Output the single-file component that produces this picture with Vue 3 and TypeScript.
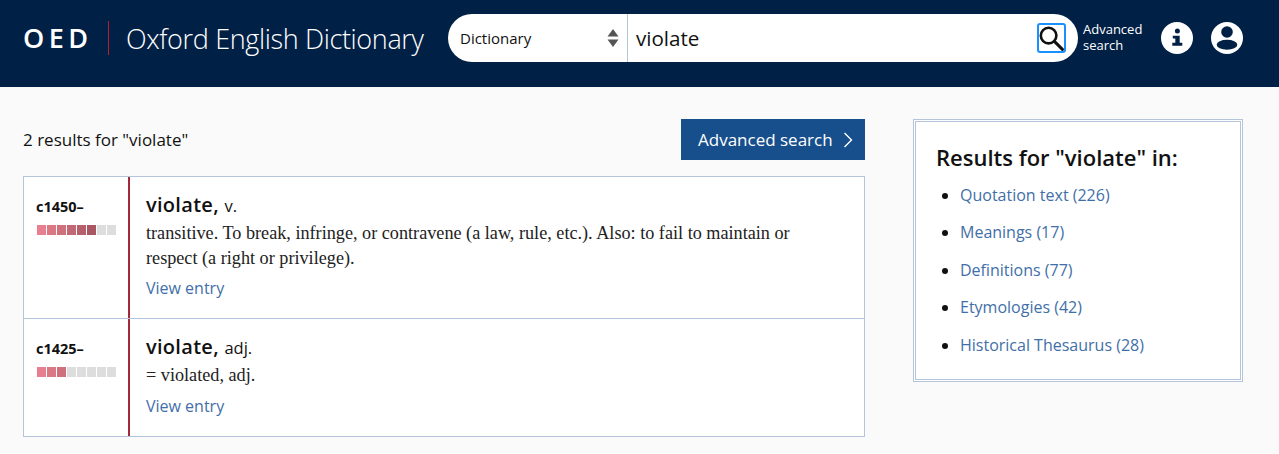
<script setup lang="ts">
interface Entry {
  date: string;
  filled: number;
  word: string;
  pos: string;
  text: string;
}

const heat = ['#e87f8f', '#da7884', '#cf707c', '#c26874', '#b6606c', '#a95763'];

const entries: Entry[] = [
  {
    date: 'c1450–',
    filled: 6,
    word: 'violate,',
    pos: 'v.',
    text: 'transitive. To break, infringe, or contravene (a law, rule, etc.). Also: to fail to maintain or respect (a right or privilege).',
  },
  {
    date: 'c1425–',
    filled: 3,
    word: 'violate,',
    pos: 'adj.',
    text: '= violated, adj.',
  },
];

const facets = [
  'Quotation text (226)',
  'Meanings (17)',
  'Definitions (77)',
  'Etymologies (42)',
  'Historical Thesaurus (28)',
];

const cellColor = (entry: Entry, i: number) => (i < entry.filled ? heat[i] : '#dddddd');
</script>

<template>
  <div class="page">
    <header class="top">
      <div class="logo">
        <span class="logo__short">OED</span>
        <span class="logo__long">Oxford English Dictionary</span>
      </div>
      <div class="search">
        <div class="search__scope">
          <span>Dictionary</span>
          <svg width="12" height="20" viewBox="0 0 12 20">
            <path d="M6 1 L11.5 8.5 H0.5 Z M6 19 L0.5 11.5 H11.5 Z" fill="#555" />
          </svg>
        </div>
        <div class="search__field">
          <span>violate</span>
          <button class="search__btn" type="button">
            <svg width="25" height="25" viewBox="0 0 25 25" fill="none" stroke="#111">
              <circle cx="9.6" cy="9.6" r="7.8" stroke-width="2.6" />
              <path d="M15.4 15.4 L23.4 23.4" stroke-width="3" stroke-linecap="round" />
            </svg>
          </button>
        </div>
      </div>
      <a class="top__adv">Advanced search</a>
      <svg class="top__icon top__icon--info" width="32" height="32" viewBox="0 0 32 32">
        <circle cx="16" cy="16" r="16" fill="#fff" />
        <circle cx="16.4" cy="9" r="2.5" fill="#012046" />
        <path d="M11.8 13.7 H18.7 V20.8 H21.3 V23.7 H11.3 V20.8 H14.3 V16.4 H11.8 Z" fill="#012046" />
      </svg>
      <svg class="top__icon" width="32" height="32" viewBox="0 0 32 32">
        <circle cx="16" cy="16" r="16" fill="#fff" />
        <circle cx="16" cy="10" r="5.8" fill="#012046" />
        <ellipse cx="16" cy="22.7" rx="10.3" ry="5" fill="#012046" />
      </svg>
    </header>

    <main class="body">
      <section class="results">
        <div class="results__head">
          <span class="results__count">2 results for "violate"</span>
          <a class="adv-btn">
            Advanced search
            <svg width="10" height="16" viewBox="0 0 10 16" fill="none" stroke="#fff" stroke-width="1.4">
              <path d="M1.5 1 L8.5 8 L1.5 15" />
            </svg>
          </a>
        </div>
        <div class="list">
          <article v-for="entry in entries" :key="entry.date" class="entry">
            <div class="entry__side">
              <div class="entry__date">{{ entry.date }}</div>
              <div class="freq">
                <i v-for="n in 8" :key="n" :style="{ background: cellColor(entry, n - 1) }"></i>
              </div>
            </div>
            <div class="entry__main">
              <h3 class="entry__title">{{ entry.word }} <small>{{ entry.pos }}</small></h3>
              <p class="entry__text">{{ entry.text }}</p>
              <a class="link">View entry</a>
            </div>
          </article>
        </div>
      </section>

      <aside class="facets">
        <h2>Results for "violate" in:</h2>
        <ul>
          <li v-for="f in facets" :key="f"><a class="link">{{ f }}</a></li>
        </ul>
      </aside>
    </main>
  </div>
</template>

<style>
html,
body {
  margin: 0;
  background: #fafafa;
}
</style>

<style scoped>
.page {
  font-family: "Open Sans", sans-serif;
  color: #111;
}

.top {
  height: 87px;
  box-sizing: border-box;
  padding: 14px 35px 0 23px;
  background: #012046;
  display: flex;
  align-items: flex-start;
  color: #fff;
}

.logo {
  width: 425px;
  height: 48px;
  display: flex;
  align-items: center;
}

.logo__short {
  width: 85px;
  height: 34px;
  line-height: 34px;
  border-right: 1px solid #b3202e;
  font-size: 27px;
  font-weight: 600;
  letter-spacing: 4.5px;
}

.logo__long {
  margin-left: 17px;
  font-size: 27px;
  font-weight: 300;
  letter-spacing: -0.35px;
  white-space: nowrap;
}

.search {
  width: 630px;
  height: 48px;
  background: #fff;
  border-radius: 24px;
  display: flex;
  color: #111;
}

.search__scope {
  width: 180px;
  box-sizing: border-box;
  padding: 0 8px 0 12px;
  border-right: 1px solid #b4c4da;
  display: flex;
  align-items: center;
  justify-content: space-between;
  font-size: 15px;
}

.search__field {
  flex: 1;
  display: flex;
  align-items: center;
  justify-content: space-between;
  padding: 0 12px 0 8px;
  font-size: 20.6px;
}

.search__btn {
  width: 29px;
  height: 30px;
  padding: 0;
  display: flex;
  align-items: center;
  justify-content: center;
  background: none;
  border: 2px solid #1a90ff;
  border-radius: 3px;
}

.top__adv {
  width: 66px;
  margin: 7px 0 0 5px;
  font-size: 13px;
  line-height: 16px;
}

.top__icon {
  margin: 8px 0 0 18px;
  flex: none;
}

.top__icon--info {
  margin-left: 12px;
}

.body {
  display: flex;
  align-items: flex-start;
  padding: 32px 36px 0 23px;
}

.results {
  width: 842px;
}

.results__head {
  height: 41px;
  margin-bottom: 16px;
  display: flex;
  align-items: center;
  justify-content: space-between;
}

.results__count {
  font-size: 17px;
}

.adv-btn {
  width: 184px;
  height: 41px;
  box-sizing: border-box;
  padding: 0 12px 0 17px;
  background: #174f8d;
  color: #fff;
  font-size: 17px;
  display: flex;
  align-items: center;
  justify-content: space-between;
}

.list {
  border: 1px solid #b4c4da;
  background: #fff;
}

.entry {
  display: flex;
}

.entry + .entry {
  border-top: 1px solid #b4c4da;
}

.entry__side {
  width: 106px;
  flex: none;
  box-sizing: border-box;
  padding: 20px 0 0 12px;
  border-right: 2px solid #a3283a;
}

.entry__date {
  font-size: 14.5px;
  font-weight: 700;
  line-height: 19px;
}

.freq {
  display: flex;
  gap: 1px;
  margin: 9px 0 0 1px;
}

.freq i {
  width: 9px;
  height: 10px;
}

.entry__main {
  flex: 1;
  padding: 14px 0 14.75px 16px;
  line-height: 30px;
}

.entry__title {
  margin: 0;
  font-size: 20px;
  font-weight: 550;
  line-height: 28px;
  letter-spacing: 0.3px;
}

.entry__title small {
  font-size: 16.5px;
  font-weight: 500;
  letter-spacing: 0;
}

.entry__text {
  max-width: 660px;
  margin: 1.25px 0 3px;
  font-family: "Liberation Serif", serif;
  font-size: 18.2px;
  line-height: 24.5px;
  color: #222;
}

.link {
  color: #3f6fa8;
  font-size: 16px;
  line-height: 30px;
  display: inline-block;
}

.facets {
  width: 330px;
  height: 263px;
  box-sizing: border-box;
  margin-left: 48px;
  padding: 19px 20px 0;
  border: 3px double #b4c4da;
  background: #fff;
}

.facets h2 {
  margin: 0 0 6.75px;
  font-size: 22px;
  font-weight: 600;
  line-height: 32px;
}

.facets ul {
  margin: 0;
  padding: 0 0 0 24px;
}

.facets li {
  height: 37.5px;
  font-size: 16px;
  line-height: 30px;
}
</style>
